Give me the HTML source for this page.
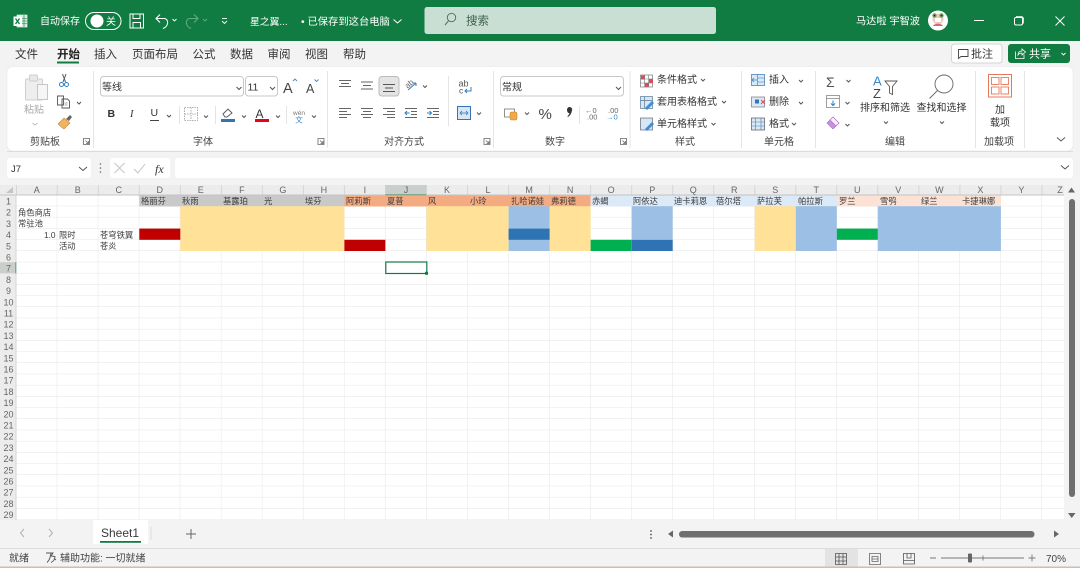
<!DOCTYPE html>
<html lang="zh"><head><meta charset="utf-8"><title>Excel</title>
<style>
html,body{margin:0;padding:0;width:1080px;height:568px;overflow:hidden;background:#f3f3f3}
svg{display:block}
text{font-family:"Liberation Sans","Noto Sans CJK SC",sans-serif;fill:#3a3a3a}
.w text,text.w{fill:#fff}
.r text{font-size:10px;fill:#333}
.g text{font-size:10px;fill:#444;text-anchor:middle}
.tb text{font-size:11.5px;fill:#333}
.c text{font-size:8.3px;fill:#3c3c3c}
.h text{font-size:9px;fill:#666;text-anchor:middle}
.s{fill:none;stroke:#555;stroke-width:1}
.ch{fill:none;stroke:#555;stroke-width:1}
</style></head><body>
<svg width="1080" height="568" viewBox="0 0 1080 568" xmlns="http://www.w3.org/2000/svg">
<defs>
<pattern id="grid" x="16.2" y="195" width="41.03" height="11.2" patternUnits="userSpaceOnUse"><path d="M41.03 0V11.2M0 11.2H41.03" stroke="#e6e6e6" stroke-width="1" fill="none"/></pattern>
</defs>
<rect width="1080" height="568" fill="#f3f3f3"/>
<!-- title bar -->
<rect width="1080" height="41" fill="#107c41"/>
<g fill="none" stroke="#fff">
<rect x="17" y="15" width="10" height="12" fill="#d5e8dc" stroke="#fff" stroke-width=".6"/>
<rect x="13.500" y="16.500" width="8.500" height="9.500" fill="#fff" stroke="none"/>
<path d="M15.500 18.500l4 5.500M19.500 18.500l-4 5.500" stroke="#107c41" stroke-width="1.300"/>
<path d="M22 18.500h5M22 21h5M22 23.500h5M24 15v12" stroke="#107c41" stroke-width=".6"/>
<rect x="85.500" y="12.500" width="35.500" height="17" rx="8.500" stroke-width="1"/>
<rect x="130" y="14" width="13.500" height="14" stroke-width="1"/>
<path d="M133 14v4.500h7V14M133 28v-5.500h7.500V28" stroke-width="1"/>
<path d="M160 14.500l-4 4 4 4M156 18.500h8c5 0 5 8-1 10" stroke-width="1.100"/>
<path d="M172.500 19l2 2 2-2" stroke-width=".9"/>
<g opacity=".35"><path d="M194 14.500l4 4-4 4M198 18.500h-8c-5 0-5 8 1 10" stroke-width="1.100"/><path d="M203 19l2 2 2-2" stroke-width=".9"/></g>
<path d="M222 18.500h5" stroke-width=".9"/>
<path d="M222 21l2.500 2.500 2.500-2.500" stroke-width=".9"/>
<path d="M393.500 19.500l4 3.500 4-3.500" stroke-width="1"/>
</g>
<circle cx="97" cy="21" r="6.500" fill="#fff"/>
<g class="w">
<text x="40" y="24.500" font-size="10">自动保存</text>
<text x="106" y="25" font-size="10">关</text>
<text x="250" y="25" font-size="9.800">星之翼...</text>
<text x="301" y="25" font-size="10.300">• 已保存到这台电脑</text>
<text x="856" y="24.500" font-size="10.200">马达啦 宇智波</text>
</g>
<rect x="424.500" y="7" width="291.500" height="27" rx="2.500" fill="#c9dfd3"/>
<circle cx="451.500" cy="17.500" r="4.200" fill="none" stroke="#45725a" stroke-width=".9"/>
<path d="M448.500 20.800l-3.500 4.200" stroke="#45725a" stroke-width="1"/>
<text x="466" y="24.500" font-size="11.500" style="fill:#3f5f4c">搜索</text>
<circle cx="938" cy="20.500" r="10" fill="#fff"/>
<circle cx="938" cy="19" r="5.500" fill="#f1c9c4"/>
<circle cx="934.500" cy="15.500" r="2.200" fill="#6f9b57"/><circle cx="941.500" cy="15.500" r="2.200" fill="#6f9b57"/>
<circle cx="934.500" cy="15.500" r=".8" fill="#222"/><circle cx="941.500" cy="15.500" r=".8" fill="#222"/>
<path d="M933 26c1-3 9-3 10 0" fill="#d46a76"/>
<rect x="935" y="18" width="6" height="4" fill="#fff"/>
<path d="M974 20.500h10" stroke="#fff" stroke-width="1"/>
<rect x="1014.500" y="17.500" width="8" height="7.500" rx="1.500" fill="none" stroke="#fff"/>
<path d="M1016.500 17v-.500h5.500l1.500 1.500v5.500" fill="none" stroke="#fff" stroke-width=".8"/>
<path d="M1055.500 16.500l9 9M1064.500 16.500l-9 9" stroke="#fff" stroke-width="1"/>
<!-- menu tabs -->
<g class="tb">
<text x="15" y="58">文件</text>
<text x="57" y="58" style="font-weight:700;fill:#222">开始</text>
<text x="94" y="58">插入</text>
<text x="132" y="58">页面布局</text>
<text x="192.500" y="58">公式</text>
<text x="230" y="58">数据</text>
<text x="267.500" y="58">审阅</text>
<text x="305" y="58">视图</text>
<text x="343" y="58">帮助</text>
</g>
<rect x="57" y="61.500" width="22" height="2" fill="#107c41"/>
<rect x="951.500" y="44" width="50.500" height="19" rx="3" fill="#fff" stroke="#d4d4d4"/>
<path d="M958.500 49.500h9.500v7h-7l-2.500 2z" fill="none" stroke="#444" stroke-width=".9"/>
<text x="971" y="57.500" font-size="11" style="fill:#333">批注</text>
<rect x="1008" y="44" width="62" height="19" rx="3" fill="#107c41"/>
<path d="M1015.500 51.500v7h8.500v-4M1018 55c0-3 2-4 4-4v-2l3.500 3-3.500 3v-2c-2 0-3 .5-4 2z" fill="none" stroke="#fff" stroke-width=".8"/>
<text x="1029" y="57.500" font-size="11" class="w">共享</text>
<path d="M1061.500 53l2 2 2-2" fill="none" stroke="#fff" stroke-width=".9"/>
<!-- ribbon -->
<rect x="7" y="66.500" width="1066" height="84.500" rx="6" fill="#fff" stroke="#e6e6e6" stroke-width=".6"/>
<path d="M7 151.500h1066" stroke="#dcdcdc" stroke-width="1"/>
<g stroke="#e4e4e4" stroke-width="1">
<path d="M93.500 71v77M327.500 71v77M493.500 71v77M630 71v77M741.500 71v77M815.500 71v77M975.500 71v77M1024.500 71v77"/>
<path d="M179.500 106v18M215.500 106v18M286.500 106v18M448.500 76v50M579.500 106v18"/>
</g>
<!-- clipboard -->
<g fill="none" stroke="#cfcfcf">
<rect x="25.500" y="79" width="17" height="21" rx="1" fill="#eeeeee"/>
<rect x="29.500" y="75" width="8" height="6" rx="1" fill="#e8e8e8"/>
<rect x="37.500" y="84.500" width="10" height="15" fill="#f6f6f6" stroke="#c6c6c6"/>
</g>
<path d="M62.500 74l3 8M66 74l-3 8" stroke="#555" stroke-width="1" fill="none"/>
<circle cx="61.500" cy="84.500" r="2" fill="none" stroke="#2f7fc4"/><circle cx="66.500" cy="84.500" r="2" fill="none" stroke="#2f7fc4"/>
<path d="M57.500 96h6l0 9h-6zM62 99h5.500l2 2v7h-7.500z" fill="#fff" stroke="#555" stroke-width=".9"/>
<path d="M64.500 103h3M64.500 105h3" stroke="#555" stroke-width=".6"/>
<path d="M77 102l2 2 2-2" class="ch"/>
<path d="M58 124l6-6 6 5-6 6z" fill="#f2b35e" stroke="#c9803a" stroke-width=".6"/>
<path d="M66 119l4-4 2 2-3 4z" fill="#666"/>
<text x="24" y="113" font-size="10" style="fill:#aaa">粘贴</text>
<path d="M32.500 123l2.500 2 2.500-2" fill="none" stroke="#aaa" stroke-width=".8"/>
<g class="g">
<text x="45" y="145">剪贴板</text>
<text x="203" y="145">字体</text>
<text x="404" y="145">对齐方式</text>
<text x="555" y="145">数字</text>
<text x="685" y="145">样式</text>
<text x="779" y="145">单元格</text>
<text x="895" y="145">编辑</text>
<text x="999" y="145">加载项</text>
</g>
<g fill="none" stroke="#666" stroke-width=".8">
<path d="M83.500 138.500h6v6h-6zM85.500 140.500l3 3M88.500 141v2.500h-2.500"/>
<path d="M318 138.500h6v6h-6zM320 140.500l3 3M323 141v2.500h-2.500"/>
<path d="M484 138.500h6v6h-6zM486 140.500l3 3M489 141v2.500h-2.500"/>
<path d="M620.500 138.500h6v6h-6zM622.500 140.500l3 3M625.500 141v2.500h-2.500"/>
</g>
<!-- font -->
<rect x="100.500" y="76.500" width="143" height="19.500" rx="3" fill="#fff" stroke="#c8c8c8"/>
<rect x="245.500" y="76.500" width="32" height="19.500" rx="3" fill="#fff" stroke="#c8c8c8"/>
<text x="102" y="90.500" font-size="10" style="fill:#333">等线</text>
<text x="247.500" y="90.500" font-size="10.500" style="fill:#333">11</text>
<path d="M236.500 87l2.500 2.500 2.500-2.500M270 87l2.500 2.500 2.500-2.500" class="ch"/>
<text x="283" y="93" font-size="14.500" style="fill:#444">A</text>
<path d="M293 81l2 -2 2 2" fill="none" stroke="#4d86b8" stroke-width=".9"/>
<text x="306" y="93" font-size="12.500" style="fill:#444">A</text>
<path d="M314.500 79.500l2 2 2-2" fill="none" stroke="#4d86b8" stroke-width=".9"/>
<text x="107.500" y="117" font-size="10.500" style="font-weight:700;fill:#333">B</text>
<text x="130" y="117" font-size="10.500" style="font-style:italic;fill:#333;font-family:'Liberation Serif',serif">I</text>
<text x="150.500" y="116" font-size="10.500" style="fill:#333">U</text>
<path d="M150 120.500h9" stroke="#444"/>
<path d="M167 115l2 2 2-2M204 115.500l2 2 2-2M242 115.500l2 2 2-2M276 115.500l2 2 2-2M312 115.500l2 2 2-2" class="ch" stroke-width=".8"/>
<path d="M184.500 107.500h13v13h-13zM191 107.500v13M184.500 114h13" fill="none" stroke="#999" stroke-width=".8" stroke-dasharray="1.500 1"/>
<path d="M223 114l5-5 4 4-5 4h-2z" fill="#fff" stroke="#555" stroke-width=".9"/>
<rect x="221" y="119" width="14" height="3" fill="#3373b6"/>
<text x="255.500" y="118" font-size="12" style="fill:#333">A</text>
<rect x="255" y="119" width="14" height="3" fill="#e8001c"/>
<text x="299" y="115" font-size="6.500" text-anchor="middle" style="fill:#777">wén</text>
<text x="299" y="122.500" font-size="7.500" text-anchor="middle" style="fill:#3a87c8">文</text>
<!-- alignment -->
<g stroke="#666" stroke-width="1" fill="none">
<path d="M339 80.500h12M341 83.500h8M339 86.500h12"/>
<path d="M361 82h12M363 85.500h8M361 89h12"/>
<path d="M339 108.500h12M339 111.500h8M339 114.500h12M339 117.500h8"/>
<path d="M361 108.500h12M363 111.500h8M361 114.500h12M363 117.500h8"/>
<path d="M383 108.500h12M387 111.500h8M383 114.500h12M387 117.500h8"/>
<path d="M405 108.500h12M411 111.500h6M411 114.500h6M405 117.500h12"/>
<path d="M427 108.500h12M433 111.500h6M433 114.500h6M427 117.500h12"/>
</g>
<path d="M405 113h4.500M407 111l-2 2 2 2" fill="none" stroke="#2f7fc4"/>
<path d="M427 113h4.500M429.500 111l2 2-2 2" fill="none" stroke="#2f7fc4"/>
<rect x="379" y="76.500" width="20" height="19.500" rx="3" fill="#e4e4e4" stroke="#bdbdbd"/>
<path d="M383 84.500h12M385 88h8M383 91.500h12" stroke="#555" fill="none"/>
<text x="405" y="86" font-size="8" transform="rotate(-40 410 84)" style="fill:#666">ab</text>
<path d="M408 90l8-7M416 83h-3M416 83v3" fill="none" stroke="#2f7fc4"/>
<path d="M423 85.500l2 2 2-2M477 112.500l2 2 2-2M525 112.500l2 2 2-2" class="ch" stroke-width=".8"/>
<text x="458.500" y="86.500" font-size="9" style="fill:#555">ab</text>
<text x="459" y="93.500" font-size="8.500" style="fill:#555">c</text>
<path d="M471 87v4h-6M467 89l-2 2 2 2" fill="none" stroke="#2f7fc4"/>
<rect x="457.500" y="106.500" width="13" height="13" fill="#d8e6f3" stroke="#3373b6"/>
<path d="M460 113h8M460 113l2-2M460 113l2 2M468 113l-2-2M468 113l-2 2" stroke="#3373b6" fill="none" stroke-width=".8"/>
<!-- number -->
<rect x="500.500" y="76.500" width="123" height="19.500" rx="3" fill="#fff" stroke="#c8c8c8"/>
<text x="502" y="90.500" font-size="10" style="fill:#333">常规</text>
<path d="M616 87l2.500 2.500 2.500-2.500" class="ch"/>
<rect x="504.500" y="109" width="10" height="8" fill="#fff" stroke="#777" stroke-width=".8"/>
<rect x="510" y="112" width="7" height="8" rx="1.500" fill="#f0a948" stroke="#c77f2b" stroke-width=".5"/>
<text x="538.500" y="119" font-size="15" style="fill:#444">%</text>
<path d="M567 109.500a2.600 2.600 0 1 1 4.800 1.500c-.3 2.500-1.500 4.500-3.800 6l-.6-.8c1.200-1 1.900-2 2-3.200-1.500.3-2.400-1.300-2.400-3.500z" fill="#333"/>
<text x="585" y="113" font-size="7.500" style="fill:#666">←0</text>
<text x="587" y="119.500" font-size="7.500" style="fill:#666">.00</text>
<text x="608" y="113" font-size="7.500" style="fill:#666">.00</text>
<text x="606" y="119.500" font-size="7.500" style="fill:#3a87c8">→0</text>
<!-- styles -->
<rect x="640.500" y="75" width="12" height="12" fill="#fff" stroke="#777" stroke-width=".7"/>
<path d="M641 75.500h4v4h-4zM645 83h4v4h-4zM649 79h4v4h-4z" fill="#e4485c"/>
<path d="M640.500 79h12M640.500 83h12M644.500 75v12M648.500 75v12" stroke="#777" stroke-width=".6"/>
<rect x="640.500" y="96.500" width="12" height="12" fill="#d6e6f5" stroke="#5a7a9a" stroke-width=".7"/>
<path d="M640.500 100.500h12M644.500 96.500v12" stroke="#5a7a9a" stroke-width=".7"/>
<path d="M645 108l7-7 2 2-7 7z" fill="#3d8ed6"/>
<rect x="640.500" y="118" width="12" height="12" fill="#d6e6f5" stroke="#5a6a7a" stroke-width=".7"/>
<path d="M645 129l7-7 2 2-7 7z" fill="#3d8ed6"/>
<g class="r">
<text x="657" y="83">条件格式</text>
<text x="657" y="105">套用表格格式</text>
<text x="657" y="127">单元格样式</text>
<text x="769" y="83">插入</text>
<text x="769" y="105">删除</text>
<text x="769" y="127">格式</text>
</g>
<path d="M701 79l2 2 2-2M722 101l2 2 2-2M711.500 123l2 2 2-2M799 80l2 2 2-2M799 102l2 2 2-2M792 123l2 2 2-2M846.500 80l2 2 2-2M845.500 102l2 2 2-2M845.500 124l2 2 2-2M884 121.500l2 2 2-2M940 121.500l2 2 2-2" class="ch" stroke-width=".8"/>
<rect x="751.500" y="74.500" width="13" height="11" fill="#dbe9f6" stroke="#3373b6" stroke-width=".7"/>
<path d="M757.500 74.500v11M757.500 78h7M757.500 82h7" stroke="#3373b6" stroke-width=".6"/>
<path d="M757 80h-5M754 78l-2 2 2 2" stroke="#3a87c8" fill="none" stroke-width=".8"/>
<rect x="751.500" y="97" width="13" height="10" fill="#dbe9f6" stroke="#777" stroke-width=".7"/>
<path d="M761 100l4 4M765 100l-4 4" stroke="#e4485c"/>
<rect x="755" y="99.500" width="4" height="4" fill="#3373b6"/>
<rect x="751.500" y="118" width="13" height="12" fill="#dbe9f6" stroke="#555" stroke-width=".7"/>
<path d="M751.500 122h13M755.500 118v12M761 118v12M751.500 126h13" stroke="#4a7fb0" stroke-width=".6"/>
<!-- editing -->
<text x="826" y="87" font-size="14" style="fill:#555">Σ</text>
<rect x="826.500" y="95.500" width="13" height="12" fill="#fff" stroke="#888" stroke-width=".8"/>
<path d="M826.500 98.500h13" stroke="#888" stroke-width=".8"/>
<path d="M833 100.500v5M831 103.500l2 2 2-2" stroke="#2f7fc4" fill="none"/>
<path d="M827 123l6-6 6 6-6 6z" fill="#c792dd" stroke="#a466c4" stroke-width=".6"/>
<path d="M830 120l6 6 3-3-6-6z" fill="#fbeffd" stroke="#a466c4" stroke-width=".6"/>
<text x="873" y="85.500" font-size="13" style="fill:#3a87c8">A</text>
<text x="873" y="98" font-size="13" style="fill:#444">Z</text>
<path d="M885 81h12l-4.500 5.500v8l-3-1.500v-6.500z" fill="none" stroke="#555" stroke-width=".9"/>
<circle cx="944" cy="84" r="9" fill="#fff" stroke="#666" stroke-width=".9"/>
<path d="M937.500 90.500l-8 8" stroke="#666" stroke-width=".9"/>
<g class="r">
<text x="860" y="111" style="fill:#333">排序和筛选</text>
<text x="916.500" y="111" style="fill:#333">查找和选择</text>
<text x="995" y="113">加</text>
<text x="990" y="126">载项</text>
</g>
<rect x="988.500" y="74.500" width="23" height="22.500" fill="#fff" stroke="#e8775a" stroke-width="1"/>
<rect x="991.500" y="77.500" width="7.500" height="7" fill="#fff" stroke="#e8775a" stroke-width=".9"/>
<rect x="1001" y="77.500" width="7.500" height="7" fill="#fff" stroke="#e8775a" stroke-width=".9"/>
<rect x="991.500" y="87" width="7.500" height="7" fill="#fff" stroke="#e8775a" stroke-width=".9"/>
<rect x="1001" y="87" width="7.500" height="7" fill="#fff" stroke="#e8775a" stroke-width=".9"/>
<path d="M1057 137.500l4 3.500 4-3.500" class="ch"/>
<!-- formula bar -->
<rect x="7" y="158" width="84" height="20" rx="3" fill="#fff"/>
<rect x="110" y="158" width="60" height="20" rx="3" fill="#fff"/>
<rect x="175" y="158" width="898" height="20" rx="3" fill="#fff"/>
<text x="11" y="172" font-size="9.500" style="fill:#333">J7</text>
<path d="M79 167l4 3.500 4-3.500M1061 165.500l4 3.500 4-3.500" fill="none" stroke="#555"/>
<circle cx="100.500" cy="164" r=".8" fill="#666"/><circle cx="100.500" cy="168" r=".8" fill="#666"/><circle cx="100.500" cy="172" r=".8" fill="#666"/>
<path d="M114.500 163l10 10M124.500 163l-10 10M134 169l4 4 7-9" fill="none" stroke="#c4c4c4"/>
<text x="155" y="173" font-size="12" style="font-style:italic;fill:#333;font-family:'Liberation Serif',serif">fx</text>
<!-- sheet -->
<rect x="0" y="185" width="1080" height="335" fill="#fff"/>
<rect x="0" y="185" width="1064" height="10" fill="#ececec"/>
<rect x="0" y="195" width="16" height="325" fill="#ececec"/>
<rect x="16.200" y="195" width="1047.800" height="325" fill="url(#grid)"/>
<path d="M6 193l7-6v6z" fill="#c4c4c4"/>
<g stroke="#d6d6d6" stroke-width="1"><path d="M16.500 185v10M57.200 185v10M98.300 185v10M139.300 185v10M180.300 185v10M221.400 185v10M262.400 185v10M303.400 185v10M344.400 185v10M385.500 185v10M426.500 185v10M467.500 185v10M508.600 185v10M549.600 185v10M590.600 185v10M631.700 185v10M672.700 185v10M713.700 185v10M754.800 185v10M795.800 185v10M836.800 185v10M877.800 185v10M918.900 185v10M959.900 185v10M1000.900 185v10M1042 185v10"/></g>
<path d="M0 195h1064" stroke="#c4c4c4"/>
<path d="M16 195v325" stroke="#d6d6d6"/>
<!-- selected headers -->
<rect x="385.300" y="185" width="41" height="10" fill="#cacfcc"/>
<rect x="385.300" y="194.300" width="41" height="1" fill="#5f9d7b"/>
<rect x="0" y="262.200" width="16" height="11.200" fill="#cacfcc"/>
<rect x="15.300" y="262.200" width="1" height="11.200" fill="#5f9d7b"/>
<!-- row 1 fill -->
<rect x="139.300" y="195.500" width="205.100" height="11" fill="#c9c9c9"/>
<rect x="344.400" y="195.500" width="246.200" height="11" fill="#f4ab82"/>
<rect x="590.600" y="195.500" width="246.200" height="11" fill="#dce9f6"/>
<rect x="836.800" y="195.500" width="164.100" height="11" fill="#fbe2d4"/>
<!-- body fills -->
<g fill="#ffe198">
<rect x="180.300" y="206.200" width="164.100" height="44.800"/>
<rect x="426.500" y="206.200" width="82.100" height="44.800"/>
<rect x="549.600" y="206.200" width="41" height="44.800"/>
<rect x="754.800" y="206.200" width="41" height="44.800"/>
</g>
<g fill="#9cc0e5">
<rect x="508.600" y="206.200" width="41" height="44.800"/>
<rect x="631.700" y="206.200" width="41" height="33.600"/>
<rect x="795.800" y="206.200" width="41" height="44.800"/>
<rect x="877.800" y="206.200" width="123.100" height="44.800"/>
</g>
<g fill="#2e74b5">
<rect x="508.600" y="228.600" width="41" height="11.200"/>
<rect x="631.700" y="239.800" width="41" height="11.200"/>
</g>
<g fill="#c00000">
<rect x="139.300" y="228.600" width="41" height="11.200"/>
<rect x="344.400" y="239.800" width="41" height="11.200"/>
</g>
<g fill="#00b050">
<rect x="590.600" y="239.800" width="41" height="11.200"/>
<rect x="836.800" y="228.600" width="41" height="11.200"/>
</g>
<!-- selection -->
<rect x="385.800" y="262" width="41" height="11.500" fill="#fff" stroke="#107c41" stroke-width="1.200"/>
<rect x="425" y="271.800" width="3" height="3" fill="#107c41"/>
<!-- column letters -->
<g class="h">
<text x="36.700" y="192.800">A</text><text x="77.700" y="192.800">B</text><text x="118.800" y="192.800">C</text><text x="159.800" y="192.800">D</text><text x="200.800" y="192.800">E</text><text x="241.900" y="192.800">F</text><text x="282.900" y="192.800">G</text><text x="323.900" y="192.800">H</text><text x="364.900" y="192.800">I</text><text x="406" y="192.800">J</text><text x="447" y="192.800">K</text><text x="488" y="192.800">L</text><text x="529.100" y="192.800">M</text><text x="570.100" y="192.800">N</text><text x="611.100" y="192.800">O</text><text x="652.200" y="192.800">P</text><text x="693.200" y="192.800">Q</text><text x="734.200" y="192.800">R</text><text x="775.300" y="192.800">S</text><text x="816.300" y="192.800">T</text><text x="857.300" y="192.800">U</text><text x="898.300" y="192.800">V</text><text x="939.400" y="192.800">W</text><text x="980.400" y="192.800">X</text><text x="1021.400" y="192.800">Y</text><text x="1060" y="192.800">Z</text>
</g>
<!-- row numbers -->
<g class="h">
<text x="8.500" y="204.500">1</text><text x="8.500" y="215.700">2</text><text x="8.500" y="226.900">3</text><text x="8.500" y="238.100">4</text><text x="8.500" y="249.300">5</text><text x="8.500" y="260.500">6</text><text x="8.500" y="271.700">7</text><text x="8.500" y="282.900">8</text><text x="8.500" y="294.100">9</text><text x="8.500" y="305.300">10</text><text x="8.500" y="316.500">11</text><text x="8.500" y="327.700">12</text><text x="8.500" y="338.900">13</text><text x="8.500" y="350.100">14</text><text x="8.500" y="361.300">15</text><text x="8.500" y="372.500">16</text><text x="8.500" y="383.700">17</text><text x="8.500" y="394.900">18</text><text x="8.500" y="406.100">19</text><text x="8.500" y="417.300">20</text><text x="8.500" y="428.500">21</text><text x="8.500" y="439.700">22</text><text x="8.500" y="450.900">23</text><text x="8.500" y="462.100">24</text><text x="8.500" y="473.300">25</text><text x="8.500" y="484.500">26</text><text x="8.500" y="495.700">27</text><text x="8.500" y="506.900">28</text><text x="8.500" y="518.100">29</text>
</g>
<!-- cells -->
<g class="c">
<text x="141" y="204.200">格丽芬</text><text x="182" y="204.200">秋雨</text><text x="223" y="204.200">基露珀</text><text x="264" y="204.200">光</text><text x="305" y="204.200">埃芬</text><text x="346" y="204.200">阿莉斯</text><text x="387" y="204.200">夏普</text><text x="428" y="204.200">风</text><text x="470" y="204.200">小玲</text><text x="511" y="204.200">扎哈诺娃</text><text x="551" y="204.200">弗莉德</text><text x="592" y="204.200">赤蝎</text><text x="633" y="204.200">阿依达</text><text x="674" y="204.200">迪卡莉恩</text><text x="716" y="204.200">蓓尔塔</text><text x="757" y="204.200">萨拉芙</text><text x="798" y="204.200">帕拉斯</text><text x="839" y="204.200">罗兰</text><text x="880" y="204.200">雪鸮</text><text x="921" y="204.200">绿兰</text><text x="962" y="204.200">卡捷琳娜</text>
<text x="18" y="215.500">角色商店</text>
<text x="18" y="226.700">常驻池</text>
<text x="55.500" y="237.900" text-anchor="end">1.0</text>
<text x="59" y="237.900">限时</text>
<text x="100" y="237.900">苍穹铁翼</text>
<text x="59" y="249.100">活动</text>
<text x="100" y="249.100">苍炎</text>
</g>
<!-- vertical scrollbar -->
<rect x="1064" y="185" width="16" height="335" fill="#f3f3f3"/>
<path d="M1071.500 187.500l3.500 5h-7z" fill="#666"/>
<rect x="1069" y="199" width="6" height="298" rx="3" fill="#6f6f6f"/>
<path d="M1068 513h7.500l-3.750 5z" fill="#666"/>
<!-- tab bar -->
<rect x="0" y="520" width="1080" height="28" fill="#f3f3f3"/>
<path d="M24 529l-3.500 4 3.500 4M49 529l3.500 4-3.500 4" fill="none" stroke="#b0b0b0" stroke-width="1"/>
<rect x="93" y="520" width="55" height="24" fill="#fff"/>
<text x="101" y="537" font-size="12" style="fill:#3a3a3a">Sheet1</text>
<rect x="100" y="541" width="41" height="1.800" fill="#107c41"/>
<path d="M151 527v13" stroke="#dcdcdc"/>
<path d="M186 534h10M191 529v10" stroke="#666" stroke-width="1"/>
<circle cx="651" cy="531" r=".9" fill="#555"/><circle cx="651" cy="534.500" r=".9" fill="#555"/><circle cx="651" cy="538" r=".9" fill="#555"/>
<path d="M668 534l5-3.500v7z" fill="#666"/>
<rect x="679" y="531" width="355.500" height="6.500" rx="3.200" fill="#6f6f6f"/>
<path d="M1059 534l-5-3.500v7z" fill="#666"/>
<!-- status bar -->
<path d="M0 548.500h1080" stroke="#dcdcdc"/>
<rect x="825" y="549" width="33" height="18" fill="#e3e3e3"/>
<text x="9" y="561.500" font-size="10" style="fill:#444">就绪</text>
<path d="M46 553h7l-2 3 4 .5c0 3-2 5-4 6M51 553.500l-1 4c-.5 2-1.500 3.500-3 5M54 558.500l2 1.500" fill="none" stroke="#555" stroke-width=".9"/>
<text x="60" y="561.500" font-size="10" style="fill:#444">辅助功能: 一切就绪</text>
<path d="M835.500 553.500h11v11h-11zM835.500 557h11M835.500 561h11M839 553.500v11M843 553.500v11" fill="none" stroke="#555" stroke-width=".8"/>
<path d="M869.500 553.500h11v11h-11zM872 556.500h6v5h-6zM872 559h6" fill="none" stroke="#666" stroke-width=".8"/>
<path d="M903.500 553.500h11v10.500h-11zM903.500 560.500h11M907 553.500v4.500h4v-4.500" fill="none" stroke="#555" stroke-width=".8"/>
<path d="M930 558h6M941 558h83M1028.500 558h7M1032 554.500v7M983 555.500v5" fill="none" stroke="#777" stroke-width=".9"/>
<rect x="968" y="553.500" width="4" height="9" rx="1" fill="#666"/>
<text x="1046" y="562" font-size="10" style="fill:#444">70%</text>
<rect x="0" y="566.500" width="1080" height="1.500" fill="#cbbfb0"/>
</svg>
</body></html>
